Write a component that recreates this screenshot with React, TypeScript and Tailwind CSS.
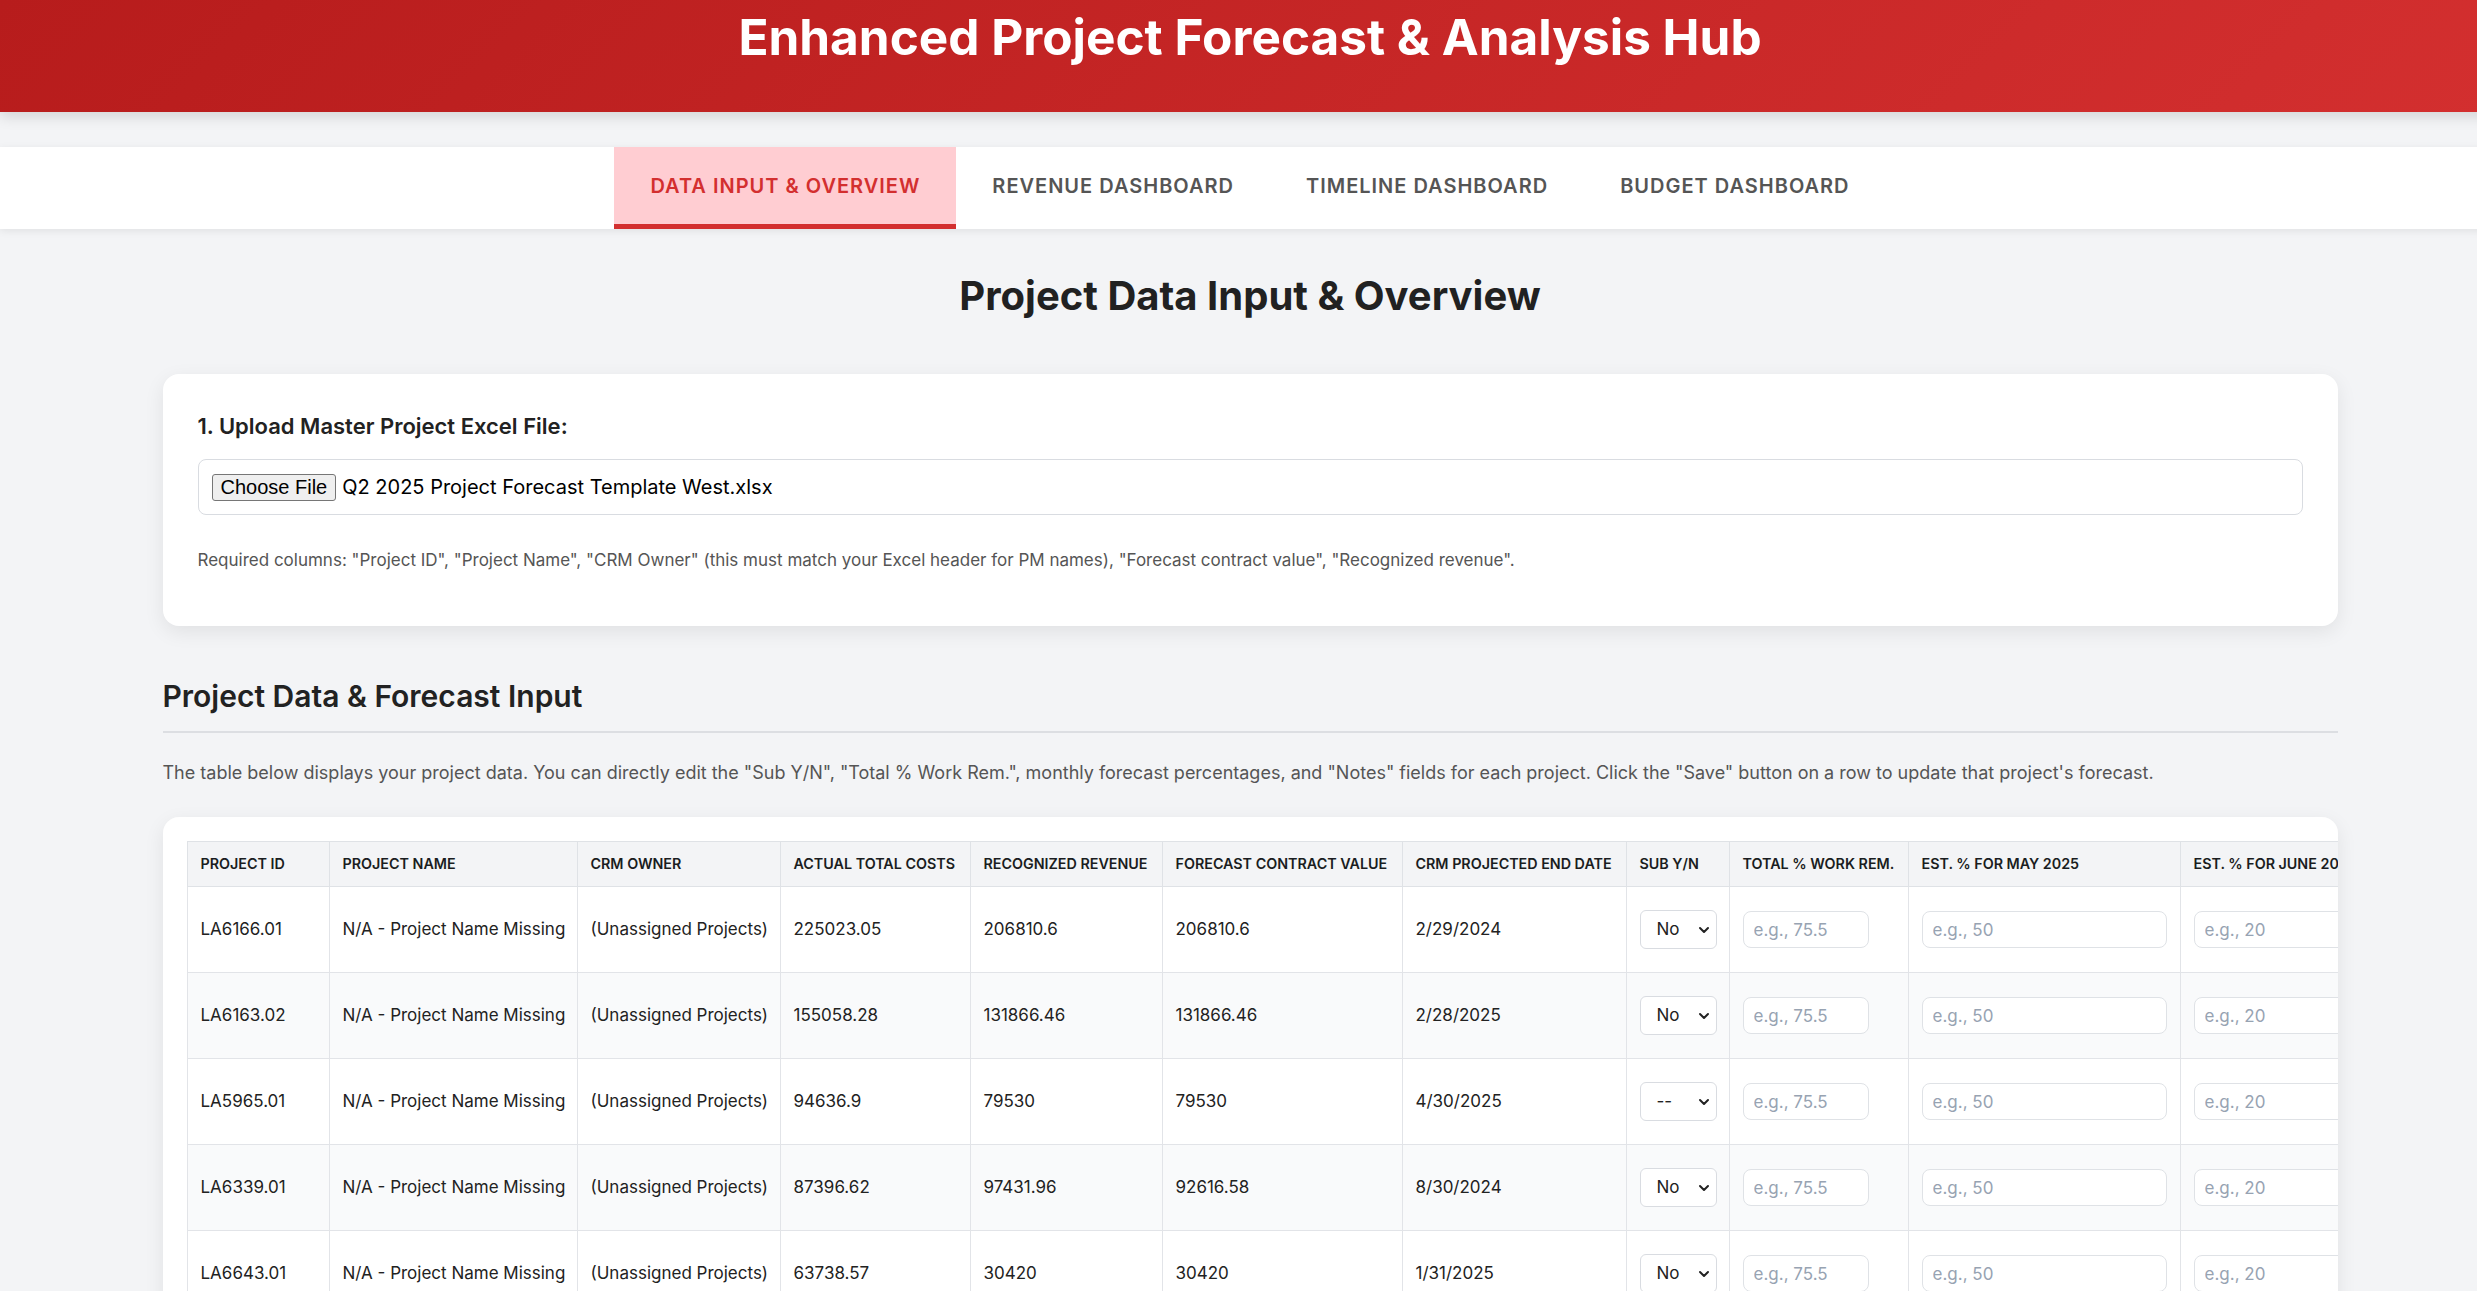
import { ChevronDown } from "lucide-react";

const tabs = [
  "Data Input & Overview",
  "Revenue Dashboard",
  "Timeline Dashboard",
  "Budget Dashboard",
];

const columns = [
  { label: "Project ID", w: "w-[142px]" },
  { label: "Project Name", w: "w-[248px]" },
  { label: "CRM Owner", w: "w-[203px]" },
  { label: "Actual Total Costs", w: "w-[190px]" },
  { label: "Recognized Revenue", w: "w-[192px]" },
  { label: "Forecast Contract Value", w: "w-[240px]" },
  { label: "CRM Projected End Date", w: "w-[224px]" },
  { label: "Sub Y/N", w: "w-[103px]" },
  { label: "Total % Work Rem.", w: "w-[179px]" },
  { label: "Est. % for May 2025", w: "w-[272px]" },
  { label: "Est. % for June 2025", w: "w-[272px]" },
  { label: "Est. % for July 2025", w: "w-[272px]" },
  { label: "Notes", w: "w-[300px]" },
  { label: "Actions", w: "w-[120px]" },
];

const rows = [
  { id: "LA6166.01", costs: "225023.05", rev: "206810.6", fcv: "206810.6", end: "2/29/2024", sub: "No" },
  { id: "LA6163.02", costs: "155058.28", rev: "131866.46", fcv: "131866.46", end: "2/28/2025", sub: "No" },
  { id: "LA5965.01", costs: "94636.9", rev: "79530", fcv: "79530", end: "4/30/2025", sub: "--" },
  { id: "LA6339.01", costs: "87396.62", rev: "97431.96", fcv: "92616.58", end: "8/30/2024", sub: "No" },
  { id: "LA6643.01", costs: "63738.57", rev: "30420", fcv: "30420", end: "1/31/2025", sub: "No" },
  { id: "LA6702.01", costs: "51220.4", rev: "48100", fcv: "48100", end: "3/31/2025", sub: "No" },
];

const td = "whitespace-nowrap border border-[#e2e4e8] px-[13px] text-[17px]";

function SubSelect({ value }: { value: string }) {
  return (
    <div className="relative w-[77px]">
      <select
        defaultValue={value}
        className="h-[39px] w-full appearance-none rounded-[6px] border border-[#d9dce1] bg-white pl-[16px] text-[17px] text-[#222]"
      >
        <option value="--">--</option>
        <option value="Yes">Yes</option>
        <option value="No">No</option>
      </select>
      <ChevronDown
        className="pointer-events-none absolute right-[5px] top-1/2 h-[16px] w-[16px] -translate-y-1/2 text-[#222]"
        strokeWidth={3}
      />
    </div>
  );
}

function PctInput({ placeholder, wide }: { placeholder: string; wide?: boolean }) {
  return (
    <input
      type="text"
      placeholder={placeholder}
      className={
        (wide ? "w-full" : "w-[126px]") +
        " h-[37px] rounded-[8px] border border-[#dfe2e6] bg-white px-[10px] text-[17px] text-[#222] placeholder:text-[#97a3b2]"
      }
    />
  );
}

export default function App() {
  return (
    <div className="min-h-screen overflow-hidden bg-[#f3f4f6] font-['Inter',sans-serif] text-[#222]">
      <div className="w-[2500px] pb-16">
        {/* Header */}
        <header className="h-[112px] bg-[linear-gradient(135deg,#b71c1c,#d32f2f)] pt-[12px] text-center shadow-[0_4px_14px_rgba(0,0,0,0.14)]">
          <h1 className="text-[49.5px] font-bold leading-[50px] text-white">
            Enhanced Project Forecast &amp; Analysis Hub
          </h1>
        </header>

        {/* Tabs */}
        <nav className="mt-[35px] flex justify-center bg-white shadow-[0_2px_8px_rgba(0,0,0,0.08)]">
          {tabs.map((t, i) => (
            <button
              key={t}
              className={
                i === 0
                  ? "flex h-[82px] items-center border-b-[5px] border-[#d32f2f] bg-[#ffcdd2] px-[36px] text-[20px] font-semibold uppercase tracking-[1px] text-[#d32f2f]"
                  : "flex h-[82px] items-center border-b-[5px] border-transparent px-[36px] text-[20px] font-semibold uppercase tracking-[1px] text-[#555]"
              }
            >
              {t}
            </button>
          ))}
        </nav>

        <main className="mx-auto w-[2175px]">
          <h2 className="mt-[43px] text-center text-[40px] font-bold leading-[48px] text-[#212121]">
            Project Data Input &amp; Overview
          </h2>

          {/* Upload card */}
          <section className="mt-[54px] rounded-[16px] bg-white px-[35px] pb-[53px] pt-[37px] shadow-[0_6px_20px_rgba(0,0,0,0.08)]">
            <label className="block text-[22px] font-semibold leading-[30px] text-[#222]">
              1. Upload Master Project Excel File:
            </label>
            <div className="mt-[18px] flex h-[56px] items-center rounded-[8px] border border-[#d9dce1] px-[13px]">
              <span className="rounded-[3px] border border-[#767676] bg-[#efefef] px-[8px] font-['Liberation_Sans',Arial,sans-serif] text-[20px] leading-[25px] text-black">
                Choose File
              </span>
              <span className="ml-[6px] text-[20px] text-black">
                Q2 2025 Project Forecast Template West.xlsx
              </span>
            </div>
            <p className="mt-[33px] text-[17px] leading-[25px] text-[#555]">
              Required columns: "Project ID", "Project Name", "CRM Owner" (this must match your Excel header for PM names), "Forecast contract value", "Recognized revenue".
            </p>
          </section>

          {/* Table section */}
          <h3 className="mt-[52px] border-b-2 border-[#dcdee2] pb-[17px] text-[30px] font-semibold leading-[36px] text-[#222]">
            Project Data &amp; Forecast Input
          </h3>
          <p className="mt-[27px] text-[18px] leading-[26px] text-[#555]">
            The table below displays your project data. You can directly edit the "Sub Y/N", "Total % Work Rem.", monthly forecast percentages, and "Notes" fields for each project. Click the "Save" button on a row to update that project's forecast.
          </p>

          <div className="mt-[31px] overflow-x-auto rounded-[16px] bg-white p-[24px] shadow-[0_6px_20px_rgba(0,0,0,0.08)]">
            <table className="w-[2957px] table-fixed border-collapse text-left">
              <colgroup>
                {columns.map((c) => (
                  <col key={c.label} className={c.w} />
                ))}
              </colgroup>
              <thead>
                <tr className="bg-[#f3f4f6]">
                  {columns.map((c) => (
                    <th
                      key={c.label}
                      className="h-[45px] whitespace-nowrap border border-[#dfe2e6] px-[13px] text-[14.3px] font-semibold uppercase text-[#1a1d21]"
                    >
                      {c.label}
                    </th>
                  ))}
                </tr>
              </thead>
              <tbody>
                {rows.map((r, i) => (
                  <tr key={r.id} className={i % 2 === 1 ? "bg-[#f9fafb]" : "bg-white"}>
                    <td className={td + " h-[86px]"}>{r.id}</td>
                    <td className={td}>N/A - Project Name Missing</td>
                    <td className={td}>(Unassigned Projects)</td>
                    <td className={td}>{r.costs}</td>
                    <td className={td}>{r.rev}</td>
                    <td className={td}>{r.fcv}</td>
                    <td className={td}>{r.end}</td>
                    <td className={td}>
                      <SubSelect value={r.sub} />
                    </td>
                    <td className={td}>
                      <PctInput placeholder="e.g., 75.5" />
                    </td>
                    <td className={td}>
                      <PctInput placeholder="e.g., 50" wide />
                    </td>
                    <td className={td}>
                      <PctInput placeholder="e.g., 20" wide />
                    </td>
                    <td className={td}>
                      <PctInput placeholder="e.g., 30" wide />
                    </td>
                    <td className={td}>
                      <textarea
                        rows={2}
                        placeholder="Add notes..."
                        className="w-full resize-none rounded-[8px] border border-[#dfe2e6] px-[10px] py-[6px] text-[17px] placeholder:text-[#97a3b2]"
                      />
                    </td>
                    <td className={td}>
                      <button className="rounded-[8px] bg-[#d32f2f] px-[18px] py-[8px] text-[17px] font-semibold text-white">
                        Save
                      </button>
                    </td>
                  </tr>
                ))}
              </tbody>
            </table>
          </div>
        </main>
      </div>
    </div>
  );
}
